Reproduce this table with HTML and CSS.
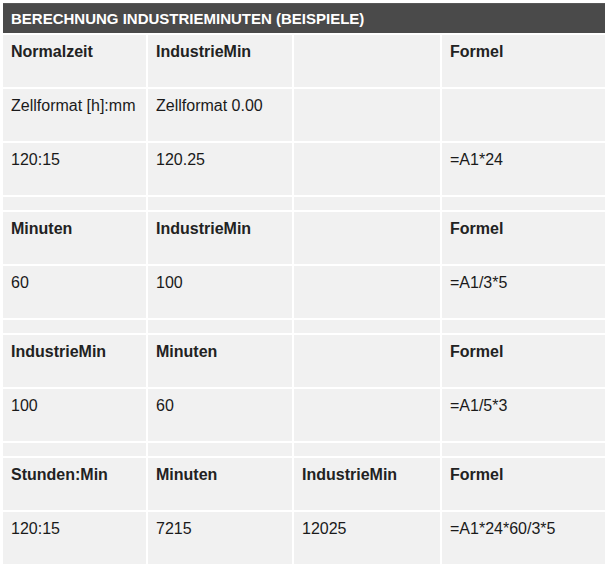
FILE: index.html
```html
<!DOCTYPE html>
<html lang="de">
<head>
<meta charset="utf-8">
<title>Berechnung Industrieminuten</title>
<link rel="stylesheet" href="styles.css">
</head>
<body>
<div class="wrap">
  <div class="bar">BERECHNUNG INDUSTRIEMINUTEN (BEISPIELE)</div>
  <table class="grid">
    <colgroup>
      <col class="c1"><col class="c2"><col class="c3"><col class="c4">
    </colgroup>
    <tbody>
      <tr class="row"><th>Normalzeit</th><th>IndustrieMin</th><th></th><th>Formel</th></tr>
      <tr class="row"><td>Zellformat [h]:mm</td><td>Zellformat 0.00</td><td></td><td></td></tr>
      <tr class="row"><td>120:15</td><td>120.25</td><td></td><td>=A1*24</td></tr>
      <tr class="spacer"><td></td><td></td><td></td><td></td></tr>
      <tr class="row"><th>Minuten</th><th>IndustrieMin</th><th></th><th>Formel</th></tr>
      <tr class="row"><td>60</td><td>100</td><td></td><td>=A1/3*5</td></tr>
      <tr class="spacer"><td></td><td></td><td></td><td></td></tr>
      <tr class="row"><th>IndustrieMin</th><th>Minuten</th><th></th><th>Formel</th></tr>
      <tr class="row"><td>100</td><td>60</td><td></td><td>=A1/5*3</td></tr>
      <tr class="spacer"><td></td><td></td><td></td><td></td></tr>
      <tr class="row"><th>Stunden:Min</th><th>Minuten</th><th>IndustrieMin</th><th>Formel</th></tr>
      <tr class="row"><td>120:15</td><td>7215</td><td>12025</td><td>=A1*24*60/3*5</td></tr>
    </tbody>
  </table>
</div>
</body>
</html>
```
FILE: styles.css
```css
html, body {
  margin: 0;
  padding: 0;
  background: #ffffff;
  overflow: hidden;
}
body {
  font-family: "Liberation Sans", Arial, Helvetica, sans-serif;
  color: #1a1a1a;
}
.wrap {
  padding: 3px 0 0 3px;
  width: 610px;
}
.bar {
  height: 30px;
  background: #4a4a4a;
  border-top: 1px solid #585858;
  box-sizing: border-box;
  color: #ffffff;
  font-weight: bold;
  font-size: 15px;
  line-height: 29px;
  padding-left: 8px;
}
.grid {
  border-collapse: separate;
  border-spacing: 2px;
  margin-left: -2px;
  width: 610px;
  table-layout: fixed;
}
.c1 { width: 143px; }
.c2 { width: 144px; }
.c3 { width: 146px; }
.c4 { width: auto; }
.grid td, .grid th {
  background: #f1f1f1;
  vertical-align: top;
  text-align: left;
  padding: 8px 8px 0 8px;
  font-size: 16px;
  line-height: 18px;
  white-space: nowrap;
}
.grid th {
  font-weight: bold;
  color: #222222;
}
.grid td {
  font-weight: normal;
}
.row td, .row th {
  height: 44px;
}
.spacer td {
  height: 13px;
  padding: 0;
}
```
